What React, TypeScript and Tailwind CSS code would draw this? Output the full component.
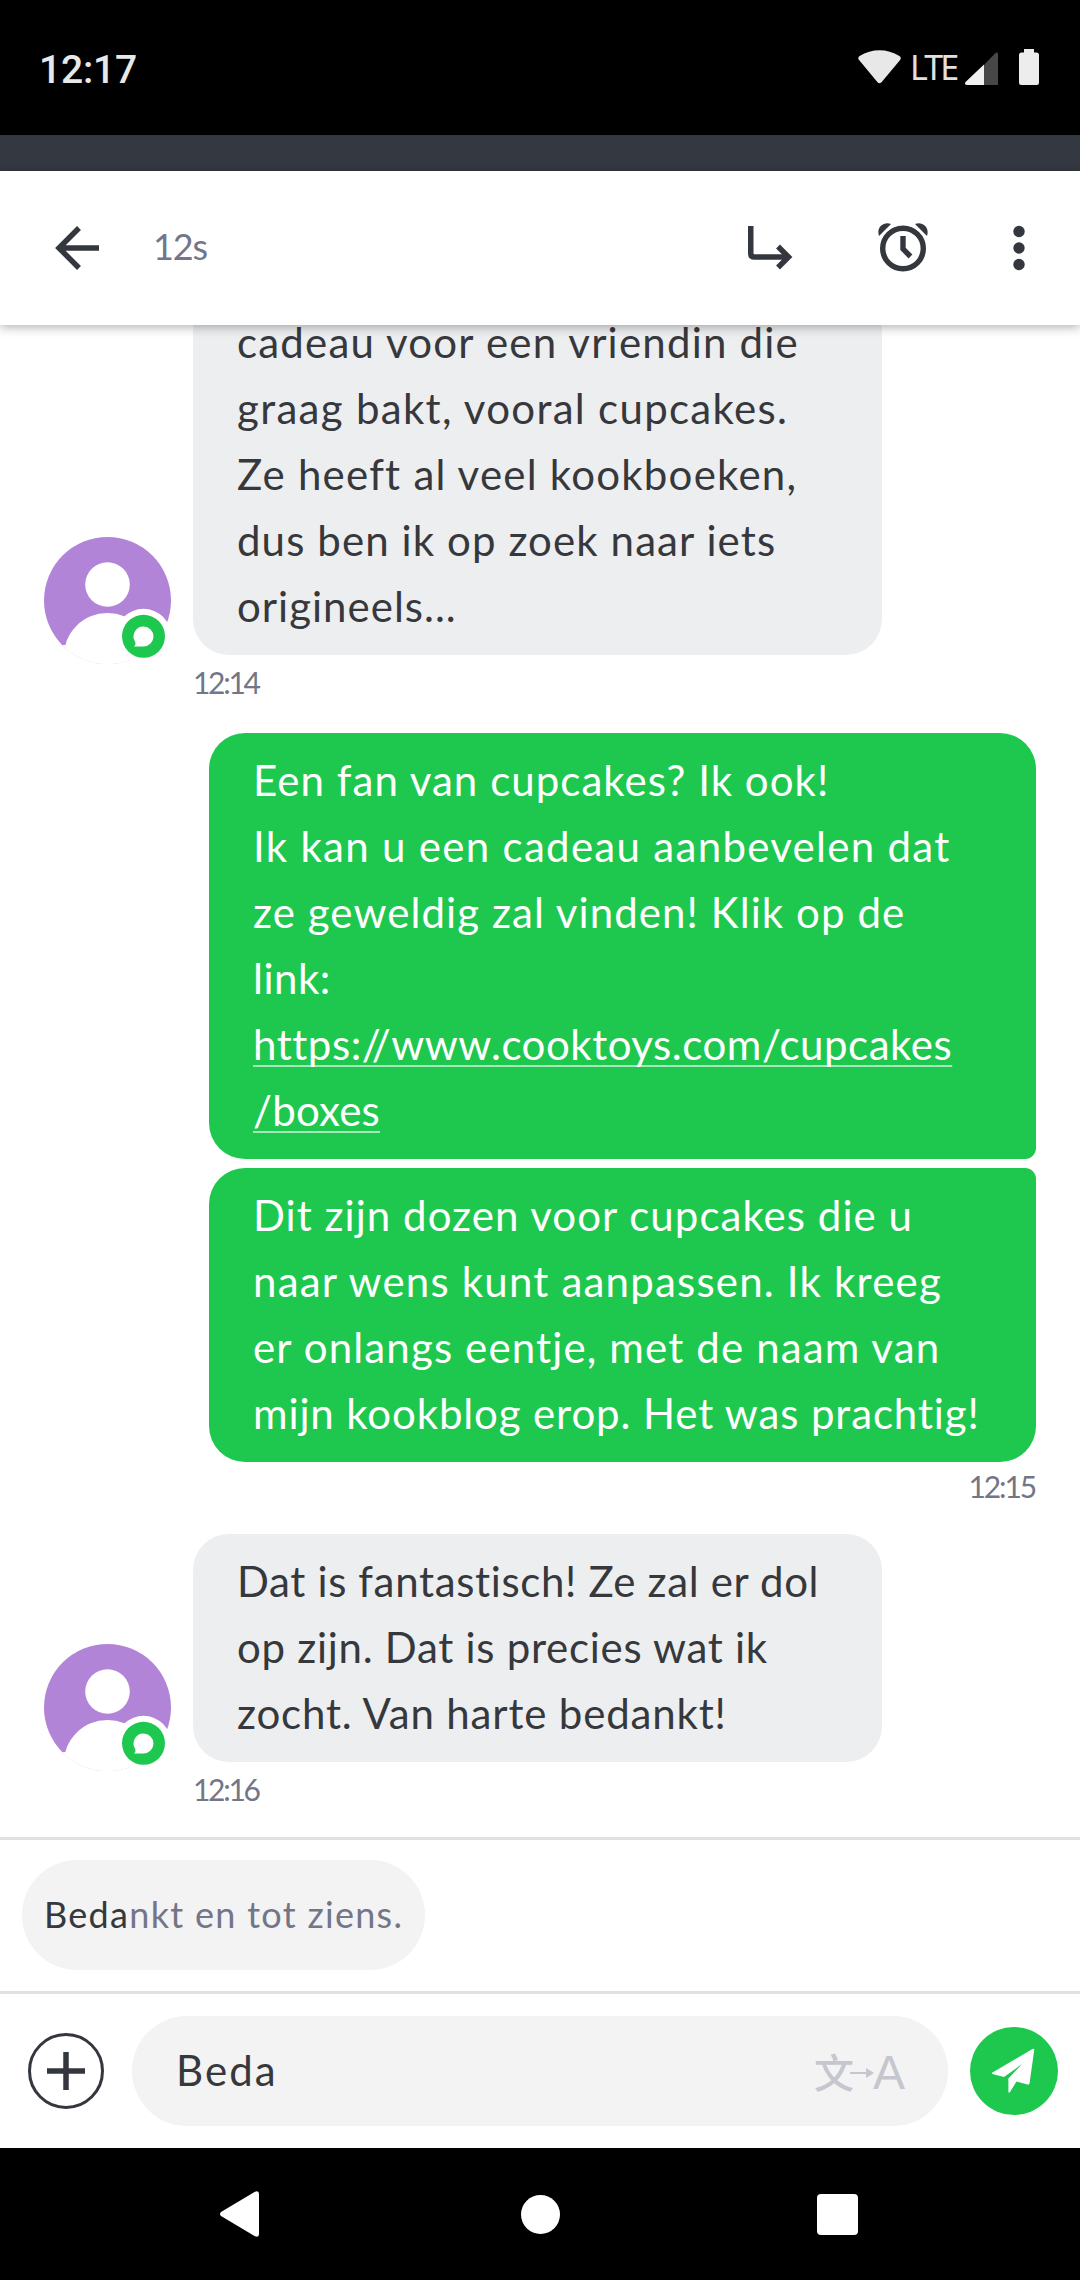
import type { ReactNode } from "react";

interface Line {
  text: string;
  tracking: string;
}

const question: Line[] = [
  { text: "cadeau voor een vriendin die", tracking: "tracking-[1.2px]" },
  { text: "graag bakt, vooral cupcakes.", tracking: "tracking-[1.3px]" },
  { text: "Ze heeft al veel kookboeken,", tracking: "tracking-[1.23px]" },
  { text: "dus ben ik op zoek naar iets", tracking: "tracking-[1.1px]" },
  { text: "origineels...", tracking: "tracking-[1px]" },
];

const answer: Line[] = [
  { text: "Een fan van cupcakes? Ik ook!", tracking: "tracking-[1.05px]" },
  { text: "Ik kan u een cadeau aanbevelen dat", tracking: "tracking-[1.3px]" },
  { text: "ze geweldig zal vinden! Klik op de", tracking: "tracking-[1.08px]" },
  { text: "link:", tracking: "tracking-[0.5px]" },
];

const link: Line[] = [
  { text: "https://www.cooktoys.com/cupcakes", tracking: "tracking-[0.53px]" },
  { text: "/boxes", tracking: "tracking-[0.2px]" },
];

const details: Line[] = [
  { text: "Dit zijn dozen voor cupcakes die u", tracking: "tracking-[1.04px]" },
  { text: "naar wens kunt aanpassen. Ik kreeg", tracking: "tracking-[1.2px]" },
  { text: "er onlangs eentje, met de naam van", tracking: "tracking-[1.14px]" },
  { text: "mijn kookblog erop. Het was prachtig!", tracking: "tracking-[0.88px]" },
];

const thanks: Line[] = [
  { text: "Dat is fantastisch! Ze zal er dol", tracking: "tracking-[0.65px]" },
  { text: "op zijn. Dat is precies wat ik", tracking: "tracking-[0.72px]" },
  { text: "zocht. Van harte bedankt!", tracking: "tracking-[0.83px]" },
];

function Lines({ lines }: { lines: Line[] }) {
  return (
    <>
      {lines.map((line) => (
        <span key={line.text} className={`block whitespace-nowrap ${line.tracking}`}>
          {line.text}
        </span>
      ))}
    </>
  );
}

function Avatar() {
  return (
    <svg width="127" height="127" viewBox="0 0 127 127" className="shrink-0">
      <defs>
        <clipPath id="avatar">
          <circle cx="63.5" cy="63.5" r="63.5" />
        </clipPath>
      </defs>
      <g clipPath="url(#avatar)">
        <rect width="127" height="127" fill="#b284d8" />
        <circle cx="63.5" cy="47.5" r="22.3" fill="#fff" />
        <ellipse cx="63.5" cy="120" rx="44" ry="44" fill="#fff" />
        <path d="M18 108h91v19H18z" fill="#fff" />
      </g>
      <circle cx="99.5" cy="99.3" r="27.5" fill="#fff" />
      <circle cx="99.5" cy="99.3" r="21.5" fill="#1ec84f" />
      <path d="M99.5 89.5a10 10 0 1 1 0 20h-9.5c1.6-1.5 1.8-2.8 1.2-4.5A10 10 0 0 1 99.5 89.5z" fill="#fff" />
    </svg>
  );
}

function Incoming({ children, time }: { children: ReactNode; time: string }) {
  return (
    <div className="shrink-0 pl-11">
      <div className="flex items-end gap-[22px]">
        <div className="-mb-[9px]">
          <Avatar />
        </div>
        <div className="w-[689px] rounded-[36px] bg-[#edeef0] pt-[14px] pb-[16px] pl-[44px] text-[#36383c]">
          {children}
        </div>
      </div>
      <p className="ml-[149px] mt-[9px] h-[37px] text-[30px] leading-9 tracking-[-2.3px] text-[#727688]">{time}</p>
    </div>
  );
}

function StatusBar() {
  return (
    <div className="flex h-[135px] shrink-0 items-start bg-black pl-[39px] pr-[41px]">
      <span className="mt-[47px] font-['Roboto'] text-[39px] font-medium leading-[46px] tracking-[-0.2px] text-[#e8e8e8]">
        12:17
      </span>
      <svg width="43" height="34" viewBox="0 0 43 34" className="ml-auto mt-[50px]">
        <path d="M1.5 10.5C-.2 9 0 7 1.6 6 14-1.6 29-1.6 41.4 6c1.6 1 1.8 3 .3 4.5L23.5 32.2c-1.2 1.4-2.8 1.4-4 0z" fill="#e8e8e8" />
      </svg>
      <span className="ml-[8px] mt-[46px] w-[48px] whitespace-nowrap pl-px font-['Noto_Sans'] text-[34px] leading-[42px] tracking-[-2.9px] text-[#e0e0e0]">
        LTE
      </span>
      <svg width="33" height="34" viewBox="0 0 33 34" className="ml-[8px] mt-[51px]">
        <path d="M19 14 30 2.5q3-2.5 3 1V34H19z" fill="#474747" />
        <path d="M19 13.5V34H2q-3-.5-1.5-3z" fill="#f0f0f0" />
      </svg>
      <svg width="20" height="36" viewBox="0 0 20 36" className="ml-[21px] mt-[49px]">
        <path d="M5 0h10v3.5h2.5Q20 3.5 20 6v27.5q0 2.5-2.5 2.5h-15Q0 36 0 33.5V6q0-2.5 2.5-2.5H5z" fill="#ededed" />
      </svg>
    </div>
  );
}

function Header() {
  return (
    <header className="relative z-10 flex h-[154px] shrink-0 items-center bg-white pl-[55px] pr-[55px] shadow-[0_2px_10px_rgba(0,0,0,0.32)]">
      <svg width="44" height="44" viewBox="0 0 44 44" fill="none" stroke="#34383e" strokeWidth="5.5">
        <path d="M44 22H5M24 2 4 22l20 20" />
      </svg>
      <span className="-mt-[4px] ml-[54px] w-[60px] text-[36px] leading-[44px] tracking-[-1.1px] text-[#727688]">12s</span>
      <svg width="46" height="46" viewBox="0 0 46 46" className="ml-auto" fill="none" stroke="#34383e" strokeWidth="5.5">
        <path d="M3.75 1v27.5q0 3.5 3.5 3.5H42" />
        <path d="m31 21.5 10.5 10.5L31 42.5" />
      </svg>
      <svg width="52" height="52" viewBox="0 0 52 52" className="ml-[84px]" fill="none" stroke="#34383e" strokeWidth="5.4">
        <circle cx="26" cy="26.5" r="20.3" />
        <path d="M26 14v13l7.5 7.5" />
        <path d="M2 14C-1 5 7-1 14 2zM50 14C53 5 45-1 38 2z" fill="#34383e" stroke="none" />
      </svg>
      <svg width="12" height="46" viewBox="0 0 12 46" className="ml-[84px]" fill="#34383e">
        <circle cx="6" cy="6.5" r="5.7" />
        <circle cx="6" cy="23" r="5.7" />
        <circle cx="6" cy="39.5" r="5.7" />
      </svg>
    </header>
  );
}

function Composer() {
  return (
    <div className="flex h-[154px] shrink-0 items-center bg-white pl-[27px] pr-[22px]">
      <svg width="78" height="78" viewBox="0 0 78 78" fill="none" stroke="#34383e">
        <circle cx="39" cy="39" r="36.5" strokeWidth="3" />
        <path d="M39 20v38M20 39h38" strokeWidth="5.5" />
      </svg>
      <div className="ml-[27px] flex h-[110px] w-[816px] items-center rounded-full bg-[#f3f3f3] pl-[44px] pr-[43px]">
        <span className="-mt-[2px] text-[42px] tracking-[2.1px] text-[#36383c]">Beda</span>
        <div className="ml-auto flex items-center text-[#c6c6ce]">
          <span className="font-['Noto_Sans_CJK_SC',sans-serif] text-[40px] font-medium leading-[48px]">文</span>
          <svg width="24" height="12" viewBox="0 0 24 12" className="-ml-[4px] mt-1" fill="currentColor">
            <path d="M0 5h16V1l8 5-8 5V7H0z" />
          </svg>
          <span className="-ml-px mt-[4px] w-8 font-['Liberation_Sans'] text-[48px] leading-[48px]">A</span>
        </div>
      </div>
      <svg width="88" height="88" viewBox="0 0 88 88" className="ml-auto">
        <circle cx="44" cy="44" r="44" fill="#1ec84f" />
        <path d="M22.5 45.5 62.5 22q2-1 1.7 1.3L59.5 56.5q-.4 1.5-2 1l-11-3-6.5 10.5q-1.5 1.7-1.6-.5V51.5L52 37 34 50l-11.5-3q-1.2-.8 0-1.5z" fill="#fff" />
      </svg>
    </div>
  );
}

function NavBar() {
  return (
    <div className="flex h-[132px] shrink-0 items-center bg-black pl-[220px]">
      <svg width="39" height="46" viewBox="0 0 39 46" fill="#fff">
        <path d="M1 21 34.5 1Q39-1 39 3v40q0 4-4.5 2L1 25q-2-2 0-4z" />
      </svg>
      <div className="ml-[262px] size-[39px] rounded-full bg-white" />
      <div className="ml-[257px] size-[41px] rounded-[4px] bg-white" />
    </div>
  );
}

export default function App() {
  return (
    <main className="flex h-[2280px] w-[1080px] flex-col overflow-hidden bg-white font-['Lato',sans-serif]">
      <StatusBar />
      <div className="h-9 shrink-0 bg-[#343840]" />
      <Header />

      {/* conversation, scrolled to the newest message */}
      <section className="flex h-[1512px] shrink-0 flex-col justify-end pb-[29px] text-[42px] leading-[66px]">
        <Incoming time="12:14">
          <Lines lines={question} />
        </Incoming>
        <div className="mr-11 mt-[32px] flex shrink-0 flex-col items-end gap-[9px] text-white">
          <div className="w-[827px] rounded-[36px] rounded-br-[11px] bg-[#1ec84f] pt-[14px] pb-[16px] pl-[44px]">
            <Lines lines={answer} />
            <a className="underline decoration-white/60 decoration-2 underline-offset-[5px] [text-decoration-skip-ink:none]">
              <Lines lines={link} />
            </a>
          </div>
          <div className="w-[827px] rounded-[36px] rounded-tr-[11px] bg-[#1ec84f] pt-[14px] pb-[16px] pl-[44px]">
            <Lines lines={details} />
          </div>
        </div>
        <p className="mr-[45px] mt-[6px] h-[37px] shrink-0 text-right text-[30px] leading-9 tracking-[-2.1px] text-[#727688]">12:15</p>
        <div className="mt-[29px] shrink-0">
          <Incoming time="12:16">
            <Lines lines={thanks} />
          </Incoming>
        </div>
      </section>

      <div className="h-[154px] shrink-0 border-t-[3px] border-[#e1e1e1] pl-[22px] pt-5">
        <div className="flex h-[110px] w-[403px] items-center rounded-full bg-[#f3f3f3] pl-[22px] text-[36px] tracking-[1.3px] text-[#727688]">
          <span className="-mt-[3px] whitespace-nowrap">
            <span className="text-[#36383c]">Beda</span>nkt en tot ziens.
          </span>
        </div>
      </div>
      <div className="h-[3px] shrink-0 bg-[#e1e1e1]" />
      <Composer />
      <NavBar />
    </main>
  );
}
